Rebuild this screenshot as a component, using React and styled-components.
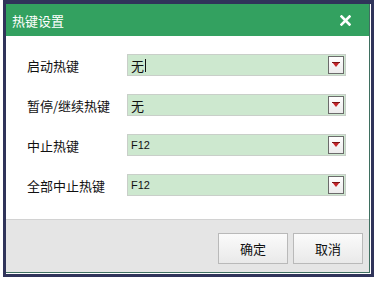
import React from 'react';
import styled, { createGlobalStyle } from 'styled-components';

const GlobalStyle = createGlobalStyle`
  html, body {
    margin: 0;
    padding: 0;
    background: #ffffff;
  }
  body {
    font-family: 'Noto Sans CJK SC', 'Liberation Sans', sans-serif;
  }
`;

const Page = styled.div`
  width: 388px;
  height: 281px;
  background: #ffffff;
  padding-left: 3px;
  box-sizing: border-box;
`;

const Frame = styled.div`
  width: 371px;
  height: 277px;
  box-sizing: border-box;
  border: 3px solid #30345a;
  border-top-width: 4px;
  background: #ffffff;
  display: flex;
`;

const Dialog = styled.div`
  flex: 1;
  display: flex;
  flex-direction: column;
  border-right: 1px solid #3f6f60;
  border-bottom: 1px solid #3f6f60;
  margin: 0 1px 1px 0;
`;

const TitleBar = styled.div`
  height: 32px;
  background: #33a160;
  display: flex;
  align-items: center;
  justify-content: space-between;
  padding: 0 18px 0 6px;
  color: #ffffff;
  font-size: 13px;
`;

const CloseIcon = () => (
  <svg width="11" height="11" viewBox="0 0 11 11">
    <path d="M1.5 1.5 L9.5 9.5 M9.5 1.5 L1.5 9.5" stroke="#ffffff" strokeWidth="2.6" strokeLinecap="square" />
  </svg>
);

const Body = styled.div`
  flex: 1;
  display: flex;
  flex-direction: column;
  gap: 18px;
  padding: 18px 0 0 21px;
`;

const Row = styled.div`
  display: flex;
  align-items: center;
  height: 22px;
`;

const Label = styled.div`
  width: 100px;
  font-size: 13px;
  color: #111111;
`;

const Select = styled.div`
  width: 219px;
  height: 22px;
  box-sizing: border-box;
  border: 1px solid #c9cfc9;
  background: #cde8cf;
  display: flex;
  align-items: center;
  justify-content: space-between;
  padding: 0 1px 0 3px;
`;

const Value = styled.span`
  font-size: ${p => (p.$latin ? '11px' : '13px')};
  font-family: ${p => (p.$latin ? "'Liberation Sans', Arial, sans-serif" : "'Noto Sans CJK SC', sans-serif")};
  color: #111111;
  display: flex;
  align-items: center;
`;

const Caret = styled.span`
  width: 1px;
  height: 13px;
  background: #111111;
  margin-left: 1px;
`;

const ArrowButton = styled.div`
  width: 16px;
  height: 18px;
  box-sizing: border-box;
  border: 1px solid #6b6b6b;
  background: linear-gradient(#ffffff, #ececec);
  display: flex;
  align-items: flex-start;
  justify-content: center;
  padding-top: 5px;
`;

const ArrowIcon = () => (
  <svg width="8" height="5" viewBox="0 0 8 5">
    <path d="M0 0 H8 L4 5 Z" fill="#c4262a" />
    <path d="M0 0.5 H8" stroke="#7a1214" strokeWidth="1" />
  </svg>
);

const Footer = styled.div`
  height: 53px;
  background: #e5e5e5;
  border-top: 1px solid #d2d2d2;
  box-sizing: border-box;
  display: flex;
  justify-content: flex-end;
  align-items: flex-start;
  gap: 5px;
  padding: 13px 6px 0 0;
`;

const Button = styled.div`
  width: 70px;
  height: 31px;
  box-sizing: border-box;
  border: 1px solid #b9b9b9;
  background: linear-gradient(#fbfbfb, #e9e9e9);
  display: flex;
  align-items: center;
  justify-content: center;
  font-size: 13px;
  color: #111111;
`;

const rows = [
  { label: '启动热键', value: '无', caret: true },
  { label: '暂停/继续热键', value: '无' },
  { label: '中止热键', value: 'F12', latin: true },
  { label: '全部中止热键', value: 'F12', latin: true },
];

const App = () => (
  <Page>
    <GlobalStyle />
    <Frame>
      <Dialog>
        <TitleBar>
          <span>热键设置</span>
          <CloseIcon />
        </TitleBar>
        <Body>
          {rows.map(r => (
            <Row key={r.label}>
              <Label>{r.label}</Label>
              <Select>
                <Value $latin={r.latin}>
                  {r.value}
                  {r.caret && <Caret />}
                </Value>
                <ArrowButton>
                  <ArrowIcon />
                </ArrowButton>
              </Select>
            </Row>
          ))}
        </Body>
        <Footer>
          <Button>确定</Button>
          <Button>取消</Button>
        </Footer>
      </Dialog>
    </Frame>
  </Page>
);

export default App;
